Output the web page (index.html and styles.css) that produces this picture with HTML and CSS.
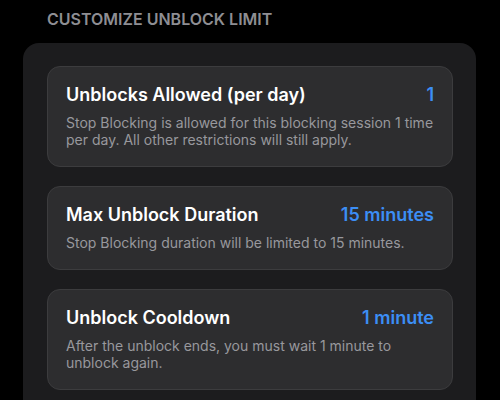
FILE: index.html
```html
<!DOCTYPE html>
<html lang="en">
<head>
  <meta charset="UTF-8">
  <meta name="viewport" content="width=device-width, initial-scale=1.0">
  <title>Customize Unblock Limit</title>
  <link rel="stylesheet" href="styles.css">
</head>
<body>
  <h2 class="section-title">CUSTOMIZE UNBLOCK LIMIT</h2>

  <div class="panel">
    <div class="limit-card">
      <div class="limit-head">
        <span class="limit-name">Unblocks Allowed (per day)</span>
        <span class="limit-value">1</span>
      </div>
      <p class="limit-desc">Stop Blocking is allowed for this blocking session 1 time per day. All other restrictions will still apply.</p>
    </div>

    <div class="limit-card">
      <div class="limit-head">
        <span class="limit-name">Max Unblock Duration</span>
        <span class="limit-value">15 minutes</span>
      </div>
      <p class="limit-desc">Stop Blocking duration will be limited to 15 minutes.</p>
    </div>

    <div class="limit-card">
      <div class="limit-head">
        <span class="limit-name">Unblock Cooldown</span>
        <span class="limit-value">1 minute</span>
      </div>
      <p class="limit-desc">After the unblock ends, you must wait 1 minute to unblock again.</p>
    </div>
  </div>
</body>
</html>
```

FILE: styles.css
```css
:root {
  --bg: #000;
  --panel: #1c1c1e;
  --card: #2d2d2f;
  --card-border: #3c3c3e;
  --text: #fff;
  --muted: #98989d;
  --blue: #3c8ef5;
}

body {
  margin: 0;
  padding: 0;
  background: var(--bg);
  color: var(--text);
  font-family: Inter, 'Noto Sans', sans-serif;
  overflow: hidden;
}

.section-title {
  margin: 9px 0 14px 47px;
  font-size: 16px;
  line-height: 20px;
  font-weight: 600;
  color: #8e8e93;
  letter-spacing: 0;
}

.panel {
  margin-left: 23px;
  width: 453px;
  box-sizing: border-box;
  padding: 23px 23px 40px 24px;
  background: var(--panel);
  border-radius: 16px;
  display: flex;
  flex-direction: column;
  gap: 19px;
}

.limit-card {
  background: var(--card);
  border: 1px solid var(--card-border);
  border-radius: 13px;
  padding: 17px 18px 18px 18px;
}

.limit-head {
  display: flex;
  justify-content: space-between;
  align-items: baseline;
  font-size: 18px;
  line-height: 22px;
}

.limit-name {
  font-weight: 600;
}

.limit-value {
  font-weight: 600;
  color: var(--blue);
}

.limit-desc {
  margin: 8px 0 0 0;
  font-size: 14px;
  line-height: 17px;
  color: var(--muted);
}
```
